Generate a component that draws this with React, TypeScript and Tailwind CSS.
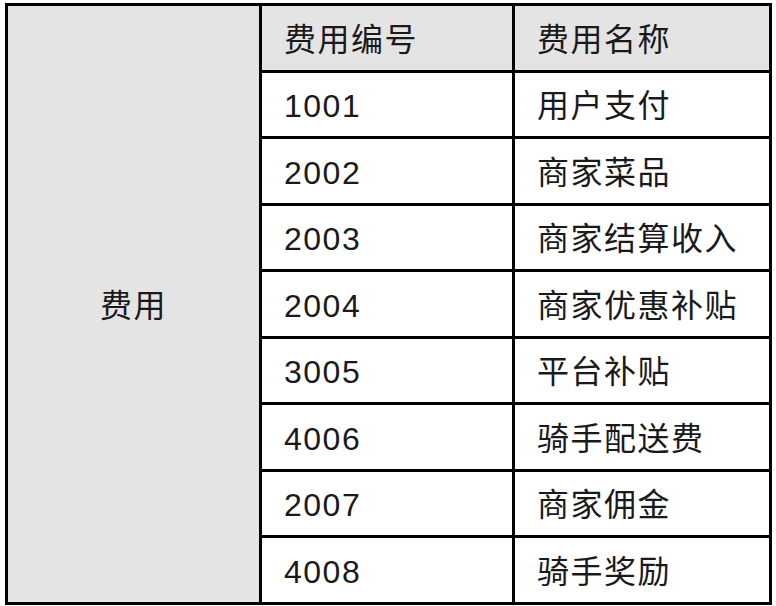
const rows = [
  ["1001", "用户支付"],
  ["2002", "商家菜品"],
  ["2003", "商家结算收入"],
  ["2004", "商家优惠补贴"],
  ["3005", "平台补贴"],
  ["4006", "骑手配送费"],
  ["2007", "商家佣金"],
  ["4008", "骑手奖励"],
];

export default function App() {
  const cell = "h-[66.5px] border-[3px] border-black pl-[22px] pt-[4px] text-left align-middle";
  return (
    <div
      className="w-[776px] h-[606px] bg-white pl-[5px] pt-[3px] text-[32px] tracking-[1.5px] text-[#1a1a1a]"
      style={{ fontFamily: '"Liberation Sans", "Noto Sans CJK SC", sans-serif' }}
    >
      <table className="table-fixed border-collapse w-[764px]">
        <colgroup>
          <col className="w-[254px]" />
          <col className="w-[253px]" />
          <col className="w-[257px]" />
        </colgroup>
        <tbody>
          <tr>
            <td
              rowSpan={9}
              className="border-[3px] border-black bg-[#e5e4e5] text-center align-middle pt-[4px]"
            >
              费用
            </td>
            <td className={`${cell} bg-[#e5e4e5]`}>费用编号</td>
            <td className={`${cell} bg-[#e5e4e5]`}>费用名称</td>
          </tr>
          {rows.map(([code, name]) => (
            <tr key={code}>
              <td className={cell}>{code}</td>
              <td className={cell}>{name}</td>
            </tr>
          ))}
        </tbody>
      </table>
    </div>
  );
}
